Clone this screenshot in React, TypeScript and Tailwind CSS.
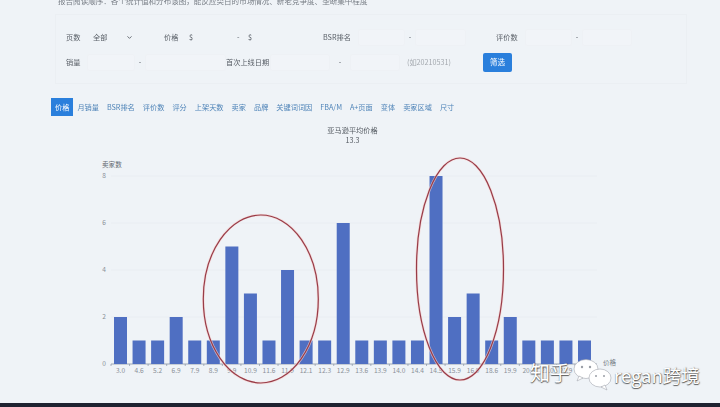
import React from "react";
import { ChevronDown } from "lucide-react";

const tabs = ["价格","月销量","BSR排名","评价数","评分","上架天数","卖家","品牌","关键词词因","FBA/M","A+页面","变体","卖家区域","尺寸"];
const vals = [2,1,1,2,1,1,5,3,1,4,1,1,6,1,1,1,1,8,2,3,1,2,1,1,1,1];
const labels = ["3.0","4.6","5.2","6.9","7.9","8.9","9.9","10.9","11.6","11.9","12.1","12.3","12.9","13.6","13.9","14.0","14.4","14.5","15.9","16.9","18.6","19.9","20.9","21.0","22.9","24.9"];

function Inp({ w }: { w: string }) {
  return <input className={`${w} h-[17px] bg-[#f1f4f8] border border-[#eef1f5] rounded-[2px] outline-none`} readOnly />;
}

export default function App() {
  return (
    <div className="relative w-[720px] h-[407px] overflow-hidden bg-[#eff3f7] flex flex-col text-[7.2px] leading-[10px] text-[#5a6068] font-['Noto_Sans_CJK_SC','Noto_Sans',sans-serif]">
      <div className="-mt-[4px] h-[10px] ml-[58px] text-[7.55px] text-[#777d85] whitespace-nowrap blur-[0.3px]">
        报告阅读顺序：各个统计值和分布该图，能反应类目的市场情况、新老竞争度、垄断集中程度
      </div>
      <div className="mt-[8px] ml-[55px] w-[632px] h-[70px] border border-[#ebeff3] pt-[13px] pl-[10px] flex flex-col gap-[7px] blur-[0.3px]">
        <div className="flex items-center h-[18px]">
          <span className="w-[27px]">页数</span>
          <div className="w-[71px]">
            <div className="w-[40px] flex items-center justify-between"><span>全部</span><ChevronDown className="w-[7px] h-[7px]" strokeWidth={3} /></div>
          </div>
          <span className="w-[25px]">价格</span>
          <span className="w-[48px]">$</span>
          <span className="w-[11px]">-</span>
          <span className="w-[75px]">$</span>
          <span className="w-[35px]">BSR排名</span>
          <Inp w="w-[47px]" />
          <span className="w-[10px] text-center">-</span>
          <Inp w="w-[51px]" />
          <span className="w-[29px] ml-[30px]">评价数</span>
          <Inp w="w-[47px]" />
          <span className="w-[10px] text-center">-</span>
          <Inp w="w-[50px]" />
        </div>
        <div className="flex items-center h-[18px]">
          <span className="w-[21px]">销量</span>
          <Inp w="w-[48px]" />
          <span className="w-[10px] text-center">-</span>
          <Inp w="w-[81px]" />
          <span className="w-[44px]">首次上线日期</span>
          <Inp w="w-[60px]" />
          <span className="w-[20px] text-center">-</span>
          <Inp w="w-[50px]" />
          <span className="w-[76px] ml-[7px] text-[#a3a8ae]">(如20210531)</span>
          <button className="w-[29px] h-[19px] rounded-[2px] bg-[#2a7fdc] text-white text-[7.5px]">筛选</button>
        </div>
      </div>
      <div className="mt-[14px] ml-[51px] flex h-[18px] items-center text-[#4f84b8] blur-[0.3px]">
        {tabs.map((t, i) => (
          <span key={t} className={i === 0 ? "h-[18px] px-[4px] flex items-center bg-[#2a7fdc] text-white" : "h-[18px] px-[4px] flex items-center"}>{t}</span>
        ))}
      </div>
      <div className="mt-[9px] w-[705px] text-center text-[#555b62] blur-[0.3px]">
        <div>亚马逊平均价格</div>
        <div>13.3</div>
      </div>
      <svg className="mt-[1px] shrink-0" width="720" height="257" viewBox="0 146 720 257" fontFamily="'Noto Sans CJK SC','Noto Sans',sans-serif" fontSize="6.6" fill="#8a9098">
        {[176, 223, 270, 317].map((y) => (
          <line key={y} x1="111" x2="597" y1={y} y2={y} stroke="#e8ebf1" strokeWidth="0.8" />
        ))}
        <line x1="111" x2="597" y1="364" y2="364" stroke="#8a94a4" strokeWidth="0.8" />
        {vals.map((v, i) => {
          const x = 114 + i * 18.56;
          return (
            <g key={i}>
              <rect x={x} y={364 - v * 23.5} width="13" height={v * 23.5} fill="#4f6fc2" />
              <line x1={x - 3} x2={x - 3} y1="364" y2="366" stroke="#8a94a4" strokeWidth="0.7" />
              <text x={x + 6.5} y="373" textAnchor="middle">{labels[i]}</text>
            </g>
          );
        })}
        {[[0, 366], [2, 319], [4, 272], [6, 225], [8, 178]].map(([n, y]) => (
          <text key={n} x="106" y={y} textAnchor="end">{n}</text>
        ))}
        <text x="102" y="167" fill="#666c74">卖家数</text>
        <text x="603" y="365" fill="#777d85">价格</text>
        <ellipse cx="260.8" cy="299" rx="57.5" ry="84" fill="none" stroke="#f6d2d0" strokeWidth="2.6" opacity="0.7" />
        <ellipse cx="460" cy="269" rx="43.5" ry="111" fill="none" stroke="#f6d2d0" strokeWidth="2.6" opacity="0.7" />
        <ellipse cx="260.8" cy="299" rx="57.5" ry="84" fill="none" stroke="#983c48" strokeWidth="1.2" />
        <ellipse cx="460" cy="269" rx="43.5" ry="111" fill="none" stroke="#983c48" strokeWidth="1.2" />
      </svg>
      <div className="h-[4px] shrink-0 bg-[#1e2230]" />

      <span className="absolute left-[530px] top-[360px] text-[20px] leading-[26px] text-white [text-shadow:0_1px_1px_rgba(50,50,50,0.8),1px_0_1px_rgba(50,50,50,0.5)]">知乎</span>
      <svg className="absolute left-[573px] top-[359px]" width="41" height="32" viewBox="0 0 41 32">
        <g fill="#ffffff" stroke="#a4a8b0" strokeWidth="0.6">
          <ellipse cx="13" cy="10" rx="12" ry="9.5" />
          <path d="M6 17l-2 5 6-3z" />
          <ellipse cx="27" cy="19" rx="11" ry="9" />
          <path d="M32 26l2 5-6-3z" />
        </g>
        <circle cx="9" cy="8" r="1.2" fill="#9a9ea6" />
        <circle cx="17" cy="8" r="1.2" fill="#9a9ea6" />
        <circle cx="23" cy="17" r="1" fill="#9a9ea6" />
        <circle cx="31" cy="17" r="1" fill="#9a9ea6" />
      </svg>
      <span className="absolute left-[614px] top-[362px] text-[18.5px] leading-[26px] whitespace-nowrap text-white [text-shadow:0_1px_1px_rgba(50,50,50,0.8),1px_0_1px_rgba(50,50,50,0.5)]">regan跨境</span>
    </div>
  );
}
